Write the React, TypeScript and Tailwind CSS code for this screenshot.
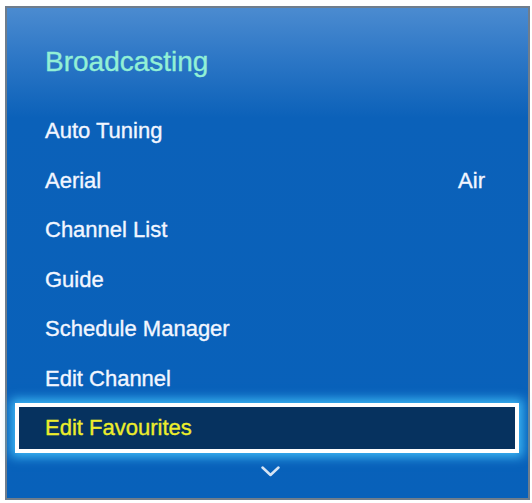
import React from "react";

const items = [
  { label: "Auto Tuning" },
  { label: "Aerial", value: "Air" },
  { label: "Channel List" },
  { label: "Guide" },
  { label: "Schedule Manager" },
  { label: "Edit Channel" },
  { label: "Edit Favourites", selected: true },
];

export default function App() {
  return (
    <div
      className="w-[532px] h-[503px] bg-white pt-[6px] pl-[5px]"
      style={{ fontFamily: '"Liberation Sans", Arial, sans-serif' }}
    >
      <div className="w-[525px] h-[494px] border-2 border-[#6f7d8c] bg-[linear-gradient(180deg,#4b8bd0_0px,#3079c7_45px,#0b61b9_110px,#0861ba_100%)] flex flex-col">
        <div className="pt-[38px] pl-[38px] text-[28px] leading-[32px] text-[#92f0d6] [-webkit-text-stroke:0.35px_#92f0d6]">
          Broadcasting
        </div>
        <div className="mt-[28px] flex flex-col pl-[8px] pr-[9px]">
          {items.map((it) =>
            it.selected ? (
              <div
                key={it.label}
                className="h-[49.5px] border-[4px] border-white bg-[#06325f] flex items-center justify-between pl-[26px] pr-[30px] shadow-[0_0_10px_4px_rgba(70,200,255,0.85)] text-[22px] text-[#eded2c] [-webkit-text-stroke:0.35px_#eded2c]"
              >
                <span className="leading-[41px]">{it.label}</span>
              </div>
            ) : (
              <div
                key={it.label}
                className="h-[49.5px] flex items-center justify-between pl-[30px] pr-[34px] text-[22px] text-[#f2f6ff] [-webkit-text-stroke:0.35px_#f2f6ff]"
              >
                <span className="leading-[49px]">{it.label}</span>
                {it.value && <span className="leading-[49px]">{it.value}</span>}
              </div>
            )
          )}
        </div>
        <div className="mt-[13px] flex justify-center pl-[5px]">
          <svg width="19" height="11" viewBox="0 0 19 11">
            <polyline
              points="1.5,1.5 9.5,9 17.5,1.5"
              fill="none"
              stroke="#d6e4f4"
              strokeWidth="2.5"
              strokeLinecap="round"
              strokeLinejoin="round"
            />
          </svg>
        </div>
      </div>
    </div>
  );
}
